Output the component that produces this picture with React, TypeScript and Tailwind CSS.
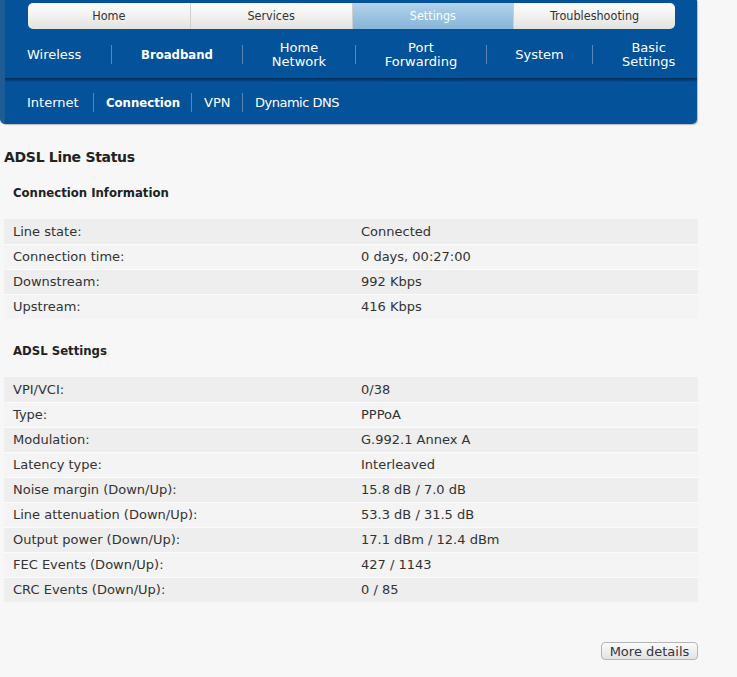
import React from "react";

const font = { fontFamily: '"DejaVu Sans", Verdana, sans-serif' };
const cond = { fontFamily: '"DejaVu Sans Condensed", "DejaVu Sans", sans-serif' };

const tabs = ["Home", "Services", "Settings", "Troubleshooting"];
const nav2 = [
  { t: ["Wireless"], w: "w-[84px] items-start" },
  { t: ["Broadband"], b: true, w: "w-[130px] items-center" },
  { t: ["Home", "Network"], w: "w-[112px] items-center" },
  { t: ["Port", "Forwarding"], w: "w-[130px] items-center" },
  { t: ["System"], w: "w-[105px] items-center" },
  { t: ["Basic", "Settings"], w: "px-[29px] items-center" },
];
const nav3 = [
  { t: "Internet", w: "w-[66px]" },
  { t: "Connection", b: true, w: "w-[97px] pl-[12px]" },
  { t: "VPN", w: "w-[50px] pl-[12px]" },
  { t: "Dynamic DNS", w: "pl-[12px] tracking-[-0.5px]" },
];

const conn: [string, string][] = [
  ["Line state:", "Connected"],
  ["Connection time:", "0 days, 00:27:00"],
  ["Downstream:", "992 Kbps"],
  ["Upstream:", "416 Kbps"],
];
const adsl: [string, string][] = [
  ["VPI/VCI:", "0/38"],
  ["Type:", "PPPoA"],
  ["Modulation:", "G.992.1 Annex A"],
  ["Latency type:", "Interleaved"],
  ["Noise margin (Down/Up):", "15.8 dB / 7.0 dB"],
  ["Line attenuation (Down/Up):", "53.3 dB / 31.5 dB"],
  ["Output power (Down/Up):", "17.1 dBm / 12.4 dBm"],
  ["FEC Events (Down/Up):", "427 / 1143"],
  ["CRC Events (Down/Up):", "0 / 85"],
];

function Table({ rows }: { rows: [string, string][] }) {
  return (
    <div className="ml-[4px] w-[694px]">
      {rows.map(([k, v], i) => (
        <div
          key={k}
          className={`flex h-[25px] items-center text-[13px] text-[#333333] ${
            i % 2 === 0 ? "bg-[#eeeeee]" : "bg-[#f4f4f4]"
          } ${i > 0 ? "border-t border-[#fbfbfb]" : ""}`}
        >
          <div className="w-[357px] pl-[9px]">{k}</div>
          <div>{v}</div>
        </div>
      ))}
    </div>
  );
}

export default function App() {
  return (
    <div className="min-h-[677px] w-[737px] bg-[#f7f7f7]" style={font}>
      {/* Blue header panel */}
      <div className="w-[697px] rounded-br-[5px] rounded-bl-[5px] bg-[#03529a] border-l-[5px] border-[#1e5c96] shadow-[1px_1px_1px_rgba(0,0,0,0.25)]">
        <div className="pl-[23px] pt-[3px]">
          <div className="grid h-[26px] w-[647px] grid-cols-4 overflow-hidden rounded-[5px]" style={cond}>
            {tabs.map((t, i) => (
              <div
                key={t}
                className={`flex items-center justify-center text-[12.5px] ${
                  t === "Settings"
                    ? "bg-gradient-to-b from-[#b3d3ea] via-[#9cc4e2] to-[#86b5d8] text-white"
                    : "bg-gradient-to-b from-[#fdfdfc] via-[#f1f1ef] to-[#e2e2df] text-[#333333]"
                } ${i > 0 ? "border-l border-[#cfcfcf]" : ""}`}
              >
                {t}
              </div>
            ))}
          </div>
        </div>
        <div className="flex h-[49px] items-center pl-[22px] pt-[2px] text-[13px] leading-[14px] text-white">
          {nav2.map((n, i) => (
            <React.Fragment key={i}>
              {i > 0 && <div className="h-[19px] w-px shrink-0 bg-[#5d86b3]" />}
              <div
                className={`flex shrink-0 flex-col text-center ${n.w} ${n.b ? "font-bold" : ""}`}
                style={n.b ? cond : undefined}
              >
                {n.t.map((l) => (
                  <span key={l} className="whitespace-nowrap">
                    {l}
                  </span>
                ))}
              </div>
            </React.Fragment>
          ))}
        </div>
        <div className="h-[4px] bg-gradient-to-b from-[#022d55] to-[#03529a]" />
        <div className="flex h-[42px] items-center pb-[2px] pt-[1px] pl-[22px] text-[13px] text-white">
          {nav3.map((n, i) => (
            <React.Fragment key={i}>
              {i > 0 && <div className="h-[19px] w-px shrink-0 bg-[#5d86b3]" />}
              <div
                className={`shrink-0 whitespace-nowrap ${n.w} ${n.b ? "font-bold" : ""}`}
                style={n.b ? cond : undefined}
              >
                {n.t}
              </div>
            </React.Fragment>
          ))}
        </div>
      </div>

      {/* Content */}
      <div className="mt-[23px] pl-[4px] text-[14px] font-bold leading-[20px] tracking-[-0.3px] text-[#222222]">
        ADSL Line Status
      </div>
      <div className="mt-[16px] pl-[13px] text-[13px] font-bold leading-[20px] text-[#222222]" style={cond}>
        Connection Information
      </div>
      <div className="mt-[16px]">
        <Table rows={conn} />
      </div>
      <div className="mt-[22px] pl-[13px] text-[13px] font-bold leading-[20px] text-[#222222]" style={cond}>
        ADSL Settings
      </div>
      <div className="mt-[16px]">
        <Table rows={adsl} />
      </div>
      <div className="mt-[40px] flex w-[698px] justify-end">
        <button className="flex h-[18px] w-[97px] items-center justify-center rounded-[4px] border border-[#b5b5b5] bg-gradient-to-b from-[#fbfbfb] to-[#e3e3e3] text-[13px] leading-none text-[#333344]">
          More details
        </button>
      </div>
    </div>
  );
}
